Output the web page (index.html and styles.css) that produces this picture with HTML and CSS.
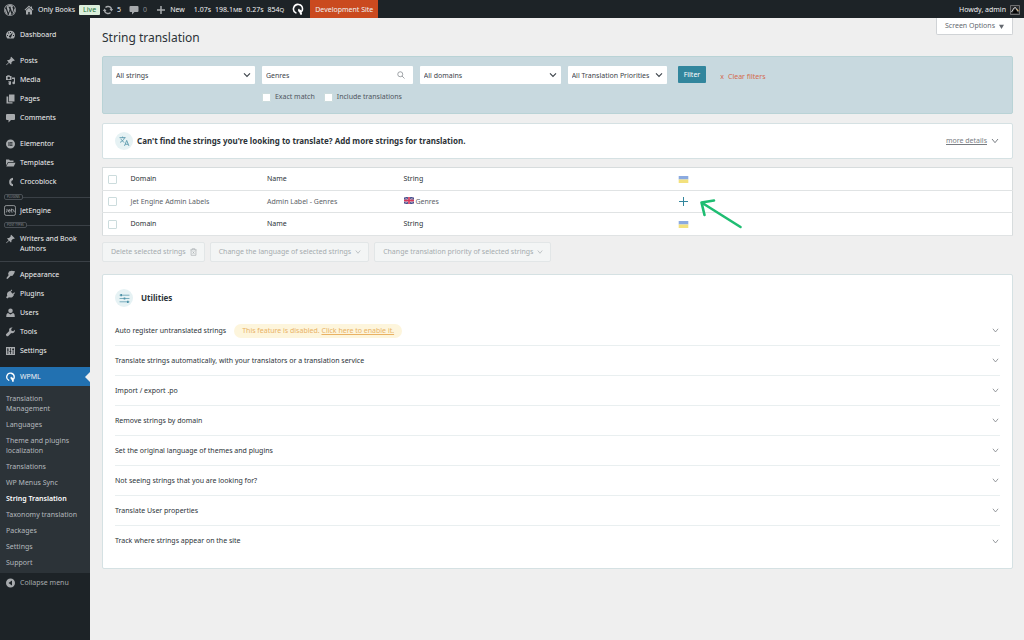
FILE: index.html
```html
<!DOCTYPE html>
<html lang="en">
<head>
<meta charset="utf-8">
<meta name="viewport" content="width=device-width, initial-scale=1">
<title>String translation</title>
<link rel="stylesheet" href="styles.css">
</head>
<body>
<svg class="defs" aria-hidden="true">
  <symbol id="wp" viewBox="0 0 20 20"><path fill-rule="evenodd" d="M20 10a10 10 0 1 1-20 0 10 10 0 0 1 20 0zM1.200 10a8.800 8.800 0 1 0 17.600 0 8.800 8.800 0 0 0-17.600 0z"/><path d="M2.600 6.900L6.500 17.800A8.200 8.200 0 0 1 2.600 6.900zM10.200 10.800l2.500 6.900a8 8 0 0 1-4.900.2zM17.200 6.200a8 8 0 0 1-3.100 10.900l2.400-7c.5-1.400.8-2.700.7-3.900zM3.300 5.300A8.200 8.200 0 0 1 15.600 4c-1.300 0-1.700 1.300-1.400 2.200.4 1.200 1.300 2 .9 3.900l-1.300 4.100-3-8.700 1-.1v-.8H7v.8l1 .1 1.300 3.600-1.900 5.400-3-9 1-.1v-.8z"/></symbol>
  <symbol id="home" viewBox="0 0 20 20"><path d="M10 1L1 9.500l1.500 1.500L10 4l7.500 7 1.500-1.500-3-2.800V3h-2.500v1.300zM10 5.500L4 11v8h4.500v-5h3v5H16v-8z"/></symbol>
  <symbol id="update" viewBox="0 0 20 20"><path d="M10 1.500a8.500 8.500 0 0 1 8.300 6.500H20.500L16.800 13 13 8h2.300A5.600 5.600 0 0 0 6 6L4 4a8.500 8.500 0 0 1 6-2.500zM3.200 7L7 12H4.700a5.600 5.600 0 0 0 9.300 2l2 2A8.500 8.500 0 0 1 1.700 12H-.5z"/></symbol>
  <symbol id="comment" viewBox="0 0 20 20"><path d="M3 2h14a2 2 0 0 1 2 2v8a2 2 0 0 1-2 2h-6l-5 5v-5H3a2 2 0 0 1-2-2V4a2 2 0 0 1 2-2z"/></symbol>
  <symbol id="plus" viewBox="0 0 20 20"><path d="M8.500 2h3v6.500H18v3h-6.500V18h-3v-6.500H2v-3h6.500z"/></symbol>
  <symbol id="wpml" viewBox="0 0 20 20"><path d="M6.500 16.500A7.500 7.500 0 1 1 17.500 10c0 3-1.500 4.500-3.500 4.500s-3-1.500-2.500-3.500" fill="none" stroke="currentColor" stroke-width="2.600" stroke-linecap="round"/><path d="M13.500 13l1.500 5" stroke="currentColor" stroke-width="3.500" stroke-linecap="round"/></symbol>
  <symbol id="dash" viewBox="0 0 20 20"><path fill-rule="evenodd" d="M3.800 17a9 9 0 1 1 12.400 0zM9 4h2v2H9zM4.800 6l1.400-1.400 1.400 1.400-1.400 1.400zM3 10h2v2H3zM15 10h2v2h-2zM14.800 4.500L8.500 11a2.200 2.200 0 1 0 3 2.600z"/></symbol>
  <symbol id="pin" viewBox="0 0 20 20"><path d="M11.500 1.500l7 7-1.500 1.400-1.800-.4-3.400 3.400c.5 1.800.1 3.200-.9 4.100L7.200 13.300 2 18.500l-.8-.8 5.200-5.200-3.500-3.600c1-1 2.400-1.400 4.200-.9l3.400-3.400-.4-1.700z"/></symbol>
  <symbol id="media" viewBox="0 0 20 20"><path fill-rule="evenodd" d="M1 2h2l1-1.500h4L9 2h3v8H1zm5.500 1.500a2.500 2.500 0 1 0 0 5 2.500 2.500 0 0 0 0-5zM13 5h6v11a2.700 2.700 0 1 1-2.200-2.700V8H13zM6 12h2.200v1.500L11 12v5.500a2.500 2.500 0 1 1-2-2.500H6z"/></symbol>
  <symbol id="pages" viewBox="0 0 20 20"><path d="M7 1h11v14H7zM2 5h3.500v11.500H14V19H2z"/></symbol>
  <symbol id="elementor" viewBox="0 0 20 20"><path fill-rule="evenodd" d="M10 1a9 9 0 1 1 0 18 9 9 0 0 1 0-18zM6 6v8h2V6zm3 0v1.700h5V6zm0 3.200v1.600h5V9.200zm0 3.100V14h5v-1.700z"/></symbol>
  <symbol id="folder" viewBox="0 0 20 20"><path d="M1 3h6l2 2h7v3H5l-4 7zM5.500 9.500H20L16.500 17H1.500z"/></symbol>
  <symbol id="croco" viewBox="0 0 20 20"><path d="M15 1.500v4.300a4.300 4.300 0 0 0 0 8.500v4.300A8.600 8.600 0 0 1 15 1.500z"/></symbol>
  <symbol id="jet" viewBox="0 0 22 20"><rect x="1" y="1" width="20" height="18" rx="3" fill="none" stroke="currentColor" stroke-width="1.500"/><path d="M3.500 13c1.500 0 2-1 2-2.500V7M8 10.500h3.500c0-3-3.500-3-3.500 0s2 3 3.500 2M13.500 6.500V12c0 1.200 1 1.500 2 1M13 8.500h3M17 8l2 5" fill="none" stroke="currentColor" stroke-width="1.600"/></symbol>
  <symbol id="brush" viewBox="0 0 20 20"><path d="M7 3l5-1.500 7 1-2 5-3.500 4.500-3-.5L4 18l-2.500-1.500L6.500 10 5 8z"/></symbol>
  <symbol id="plug" viewBox="0 0 20 20"><path d="M12 1l1.500 1.500-3 3 4 4 3-3L19 8l-3 3 1 1-3 4c-2 1.500-5 1.500-7 .5L3.500 19 1 16.500l2.500-3C2.500 11 3 8.500 4.500 6.500L8 4l1 1z"/></symbol>
  <symbol id="user" viewBox="0 0 20 20"><circle cx="10" cy="5.500" r="4.500"/><path d="M5 10l5 3 5-3c3 1 3.500 3 3.500 8h-17c0-5 .5-7 3.500-8z"/></symbol>
  <symbol id="wrench" viewBox="0 0 20 20"><path d="M18.500 5.500l-3 3-3.500-.8-.7-3.500 3-3C12 .5 9.500 1 8 3 7 4.500 7 6.500 7.500 8L1 14.500c-1 2 1.800 5 4 4L11.500 12c2 .7 4 .3 5.500-1 1.500-1.500 2.200-3.500 1.500-5.500z"/></symbol>
  <symbol id="sliders" viewBox="0 0 20 20"><path fill-rule="evenodd" d="M1 2h18v16H1zm3 2v3H3v2h1v7h1.500V9h1V7h-1V4zm5 0v6H8v2h1v4h1.500v-4h1v-2h-1V4zm5.500 0v2h-1v2h1v8H16V8h1V6h-1V4z"/></symbol>
  <symbol id="collapse" viewBox="0 0 20 20"><path fill-rule="evenodd" d="M10 1a9 9 0 1 1 0 18 9 9 0 0 1 0-18zm3 4l-7 5 7 5z"/></symbol>
  <symbol id="chev" viewBox="0 0 12 8"><path d="M1.500 1.500L6 6l4.500-4.500" fill="none" stroke="currentColor" stroke-width="1.700"/></symbol>
  <symbol id="thin" viewBox="0 0 12 8"><path d="M1.500 1L6 6.500 10.500 1" fill="none" stroke="currentColor" stroke-width="1.300"/></symbol>
  <symbol id="ua" viewBox="0 0 11 8"><path fill="#8baae0" d="M0 0h11v4H0z"/><path fill="#f3e17d" d="M0 4h11v4H0z"/></symbol>
</svg>

<header class="topbar">
  <a class="bar-item" href="#" aria-label="About WordPress"><svg class="i12"><use href="#wp"/></svg></a>
  <a class="bar-item site" href="#"><svg class="i10"><use href="#home"/></svg>Only Books <span class="live">Live</span></a>
  <a class="bar-item updates" href="#"><svg class="i10"><use href="#update"/></svg>5</a>
  <a class="bar-item dim" href="#"><svg class="i10"><use href="#comment"/></svg>0</a>
  <a class="bar-item new" href="#"><svg class="i10"><use href="#plus"/></svg>New</a>
  <a class="bar-item stats" href="#"><span>1.07s</span><span>198.1<small>MB</small></span><span>0.27s</span><span>854<small>Q</small></span></a>
  <a class="bar-item lang" href="#" aria-label="WPML"><svg class="i12"><use href="#wpml"/></svg></a>
  <a class="bar-item dev" href="#">Development Site</a>
  <a class="bar-item account" href="#">Howdy, admin
    <svg class="avatar" viewBox="0 0 20 20"><path fill="#292b2d" stroke="#888" stroke-width="1.500" d="M1 1h18v18H1z"/><path d="M3 14l5-8 3-1 5 8" fill="none" stroke="#d5d5d5" stroke-width="2"/><path d="M5 16l5-8 6 8z" fill="#050505"/><path d="M14 8l3 4" stroke="#c79a50" stroke-width="2"/></svg>
  </a>
</header>

<div class="shell">
  <nav class="sidebar">
    <a class="nav first" href="#"><svg><use href="#dash"/></svg>Dashboard</a>
    <div class="group posts">
      <a class="nav" href="#"><svg><use href="#pin"/></svg>Posts</a>
      <a class="nav" href="#"><svg><use href="#media"/></svg>Media</a>
      <a class="nav" href="#"><svg><use href="#pages"/></svg>Pages</a>
      <a class="nav" href="#"><svg><use href="#comment"/></svg>Comments</a>
    </div>
    <div class="group">
      <a class="nav" href="#"><svg><use href="#elementor"/></svg>Elementor</a>
      <a class="nav" href="#"><svg><use href="#folder"/></svg>Templates</a>
      <a class="nav" href="#"><svg><use href="#croco"/></svg>Crocoblock</a>
    </div>
    <div class="divider"><span>PLUGINS</span></div>
    <a class="nav jet" href="#"><svg><use href="#jet"/></svg>JetEngine</a>
    <div class="divider"><span>POST TYPES</span></div>
    <a class="nav two" href="#"><svg><use href="#pin"/></svg>Writers and Book Authors</a>
    <div class="divider plain"></div>
    <div class="admin">
      <a class="nav" href="#"><svg><use href="#brush"/></svg>Appearance</a>
      <a class="nav" href="#"><svg><use href="#plug"/></svg>Plugins</a>
      <a class="nav" href="#"><svg><use href="#user"/></svg>Users</a>
      <a class="nav" href="#"><svg><use href="#wrench"/></svg>Tools</a>
      <a class="nav" href="#"><svg><use href="#sliders"/></svg>Settings</a>
    </div>
    <a class="nav current" href="#"><svg><use href="#wpml"/></svg>WPML</a>
    <div class="submenu">
      <a href="#">Translation Management</a>
      <a href="#">Languages</a>
      <a href="#">Theme and plugins localization</a>
      <a href="#">Translations</a>
      <a href="#">WP Menus Sync</a>
      <a class="on" href="#">String Translation</a>
      <a href="#">Taxonomy translation</a>
      <a href="#">Packages</a>
      <a href="#">Settings</a>
      <a href="#">Support</a>
    </div>
    <button class="nav collapse" type="button"><svg><use href="#collapse"/></svg>Collapse menu</button>
  </nav>

  <main class="content">
    <div class="heading">
      <h1>String translation</h1>
      <button class="screen-options" type="button">Screen Options <svg viewBox="0 0 8 8"><path d="M0 1h8L4 8z"/></svg></button>
    </div>

    <form class="filters">
      <div class="field"><select aria-label="Strings"><option>All strings</option></select><svg><use href="#chev"/></svg></div>
      <div class="field"><input type="text" aria-label="Search" value="Genres"><svg class="search" viewBox="0 0 16 16"><circle cx="6.500" cy="6.500" r="5" fill="none" stroke="currentColor" stroke-width="1.400"/><path d="M10 10l5 5" stroke="currentColor" stroke-width="1.400"/></svg></div>
      <div class="field"><select aria-label="Domains"><option>All domains</option></select><svg><use href="#chev"/></svg></div>
      <div class="field priority"><select aria-label="Priorities"><option>All Translation Priorities</option></select><svg><use href="#chev"/></svg></div>
      <button class="apply" type="button">Filter</button>
      <a class="clear" href="#"><span>x</span>Clear filters</a>
      <div class="options">
        <label><input type="checkbox">Exact match</label>
        <label><input type="checkbox">Include translations</label>
      </div>
    </form>

    <section class="card notice">
      <span class="badge"><svg viewBox="0 0 20 20"><path d="M1 3h11M6.500 1v2M10 3c-1 4-4 7-8 8.500M3.500 5c1 3 3.500 5 6 6.500M10 18l4-10 4 10M11.500 15h5" fill="none" stroke="currentColor" stroke-width="1.500"/></svg></span>
      <h2>Can't find the strings you're looking to translate? Add more strings for translation.</h2>
      <a class="more" href="#">more details</a>
      <svg class="chev"><use href="#thin"/></svg>
    </section>

    <table class="strings">
      <colgroup><col class="c-check"><col class="c-text"><col class="c-text"><col class="c-string"><col></colgroup>
      <thead><tr><td><input type="checkbox" aria-label="Select all"></td><th>Domain</th><th>Name</th><th>String</th><th><svg class="flag" role="img" aria-label="Ukrainian"><use href="#ua"/></svg></th></tr></thead>
      <tbody><tr><td><input type="checkbox" aria-label="Select Genres"></td><td>Jet Engine Admin Labels</td><td>Admin Label - Genres</td>
        <td><svg class="uk" viewBox="0 0 20 14"><path fill="#41518f" d="M0 0h20v14H0z"/><path d="M0 0l20 14M20 0L0 14" stroke="#b9a5c4" stroke-width="2"/><path d="M10 0v14M0 7h20" stroke="#e0bccb" stroke-width="4.500"/><path d="M10 0v14M0 7h20" stroke="#d8385a" stroke-width="3"/></svg>Genres</td>
        <td><a class="add" href="#" aria-label="Add translation"><svg class="cross" viewBox="0 0 9 9"><path d="M4.500 0v9M0 4.500h9" stroke="#32869d" stroke-width="1"/></svg><svg class="pointer" viewBox="0 0 44 30"><path d="M41.500 28L2.500 3.500M15 1.500L2.500 3.500 5.500 16" fill="none" stroke="#1fbd72" stroke-width="2.600" stroke-linecap="round" stroke-linejoin="round"/></svg></a></td></tr></tbody>
      <tfoot><tr><td><input type="checkbox" aria-label="Select all"></td><th>Domain</th><th>Name</th><th>String</th><th><svg class="flag" role="img" aria-label="Ukrainian"><use href="#ua"/></svg></th></tr></tfoot>
    </table>

    <div class="bulk">
      <button type="button" disabled>Delete selected strings<svg class="trash" viewBox="0 0 16 18"><path d="M1 4h14M5 4V1.500h6V4M2.500 4v12.500h11V4M6 7.500l4 5.500M10 7.500L6 13" fill="none" stroke="currentColor" stroke-width="1.500"/></svg></button>
      <button type="button" disabled>Change the language of selected strings<svg><use href="#thin"/></svg></button>
      <button type="button" disabled>Change translation priority of selected strings<svg><use href="#thin"/></svg></button>
    </div>

    <section class="card utilities">
      <div class="util-head">
        <span class="badge"><svg viewBox="0 0 20 20"><path d="M1 4h18M1 10h18M1 16h18" stroke="currentColor" stroke-width="1.300"/><path d="M4 2v4M10 8v4M16 14v4" stroke="currentColor" stroke-width="3"/></svg></span>
        <h2>Utilities</h2>
      </div>
      <ul>
        <li>Auto register untranslated strings<span class="warn">This feature is disabled. <a href="#">Click here to enable it.</a></span><svg><use href="#thin"/></svg></li>
        <li>Translate strings automatically, with your translators or a translation service<svg><use href="#thin"/></svg></li>
        <li>Import / export .po<svg><use href="#thin"/></svg></li>
        <li>Remove strings by domain<svg><use href="#thin"/></svg></li>
        <li>Set the original language of themes and plugins<svg><use href="#thin"/></svg></li>
        <li>Not seeing strings that you are looking for?<svg><use href="#thin"/></svg></li>
        <li>Translate User properties<svg><use href="#thin"/></svg></li>
        <li>Track where strings appear on the site<svg><use href="#thin"/></svg></li>
      </ul>
    </section>
  </main>
</div>
</body>
</html>
```
FILE: styles.css
```css
* { box-sizing: border-box; }
body {
  margin: 0;
  min-height: 100vh;
  display: flex;
  flex-direction: column;
  background: #efefef;
  color: #3c434a;
  font: 7px/10px "Noto Sans", "Open Sans", sans-serif;
}
.defs { display: none; }
svg { fill: currentColor; flex: none; }
a { color: inherit; text-decoration: none; }
button, input, select { font: inherit; color: inherit; margin: 0; }
h1, h2 { margin: 0; }

/* Admin bar */
.topbar {
  height: 18px;
  display: flex;
  background: #1d2327;
  color: #f0f0f1;
}
.bar-item { display: flex; align-items: center; gap: 4px; padding-top: 1px; white-space: nowrap; }
.bar-item svg { color: #a7aaad; }
.i12 { width: 12px; height: 12px; }
.i10 { width: 10px; height: 10px; }
.topbar > :first-child { padding-left: 4px; }
.site { padding-left: 8px; }
.live {
  background: #dcefdc;
  color: #24733a;
  line-height: 10px;
  padding: 0 4px;
  border-radius: 1px;
}
.updates { padding-left: 3px; }
.dim { padding-left: 8px; color: #8c8f94; }
.new { padding-left: 9px; }
.stats { padding-left: 9px; gap: 4px; }
.stats small { font-size: 6px; }
.lang { padding: 0 6px 0 8px; }
.bar-item.lang svg { color: #fff; }
.dev { background: #ca4a1f; padding: 1px 5px 0; }
.account { margin-left: auto; padding-right: 4px; }
.avatar { width: 10px; height: 10px; }

/* Sidebar */
.shell { flex: 1; display: flex; align-items: stretch; }
.sidebar { width: 90px; flex: none; background: #1d2327; color: #f0f0f1; }
.nav {
  position: relative;
  display: flex;
  align-items: center;
  gap: 4px;
  width: 100%;
  padding: 4px 5px;
  line-height: 11px;
}
.nav svg { width: 11px; height: 10px; color: #a7aaad; }
.first { margin-top: 7px; }
.group { margin-top: 6px; padding-bottom: 1px; }
.posts { margin-top: 7px; }
.divider { position: relative; height: 10px; display: flex; align-items: center; }
.divider::after { content: ""; flex: 1; height: 1px; background: #3a4046; }
.divider span {
  margin-left: 4px;
  padding: 0 2px;
  border: 1px solid #4a5056;
  border-radius: 2px;
  color: #8c9095;
  font-size: 3px;
  line-height: 4px;
}
.jet { padding: 3px 4px 4px; }
.jet svg { width: 12px; height: 11px; }
.two { align-items: flex-start; line-height: 10px; }
.plain { height: 7px; }
.admin { padding-bottom: 7px; }
.current { background: #2271b1; }
.nav.current svg { color: #fff; }
.current::after {
  content: "";
  position: absolute;
  right: 0;
  top: 5px;
  border: 5px solid transparent;
  border-left: 0;
  border-right-color: #efefef;
}
.submenu { background: #2c3338; color: #b4b9be; padding: 5px 0 2px; }
.submenu a { display: block; padding: 3px 12px 3px 6px; }
.submenu .on { color: #fff; font-weight: 600; }
.collapse { border: 0; background: none; color: #a7aaad; }

/* Page */
.content { flex: 1; min-width: 0; padding: 0 11px 20px 12px; }
.heading { display: flex; justify-content: space-between; align-items: flex-start; height: 38px; }
h1 { font-size: 12px; line-height: 16px; font-weight: 400; color: #2c3338; padding-top: 12px; }
.screen-options {
  display: flex;
  align-items: center;
  gap: 4px;
  height: 17px;
  padding: 0 8px;
  border: 1px solid #d0d3d6;
  border-top: 0;
  border-radius: 0 0 2px 2px;
  background: #fff;
  color: #646970;
}
.screen-options svg { width: 5px; height: 5px; }

.filters {
  display: grid;
  grid-template-columns: 143fr 151fr 141fr auto auto 290fr;
  column-gap: 7px;
  row-gap: 8px;
  padding: 9px;
  height: 58px;
  align-content: start;
  background: #c8d9df;
  border: 1px solid #b9d3d6;
  border-radius: 2px;
}
.field { position: relative; height: 18px; }
.field select, .field input {
  display: block;
  width: 100%;
  height: 18px;
  padding: 1px 4px 0;
  border: 0;
  border-radius: 1px;
  background: #fff;
  color: #3c434a;
  appearance: none;
}
.field.priority select { padding-right: 17px; }
.field svg { position: absolute; right: 4px; top: 6px; width: 8px; height: 6px; pointer-events: none; }
.field .search { right: 8px; top: 5px; height: 8px; color: #7a8085; }
.apply { height: 17px; padding: 0 6px; margin-left: 4px; border: 0; border-radius: 1px; background: #32869d; color: #fff; }
.clear { display: flex; gap: 4px; color: #d4694e; padding: 6px 0 0 7px; }
.options { grid-column: 2 / -1; display: flex; gap: 9px; }
.options label { display: flex; align-items: center; gap: 4px; color: #50575e; }
input[type="checkbox"] {
  appearance: none;
  display: block;
  width: 9px;
  height: 9px;
  border: 1px solid #ccdcdd;
  border-radius: 1px;
  background: #fff;
}

.card { background: #fff; border: 1px solid #d5e1e3; border-radius: 2px; }
.notice { display: flex; align-items: center; height: 36px; margin: 9px 0 8px; padding: 0 13px 0 12px; }
.badge {
  display: grid;
  place-items: center;
  width: 18px;
  height: 18px;
  border-radius: 50%;
  background: #e6f2f4;
  color: #4f93a8;
}
.badge svg { width: 11px; height: 11px; }
h2 { font-size: 8px; line-height: 12px; font-weight: 700; color: #2c3338; }
.notice h2 { margin-left: 4px; }
.more { margin-left: auto; color: #787c82; text-decoration: underline; }
.chev { width: 8px; height: 6px; margin-left: 4px; color: #646970; }

.strings { width: 100%; table-layout: fixed; border-collapse: collapse; background: #fff; border: 1px solid #d7dcdd; }
.strings tr { height: 23px; border-bottom: 1px solid #e0e3e4; }
.strings tbody tr { height: 22px; }
.strings td, .strings th { padding: 0; text-align: left; font-weight: 400; color: #2c3338; }
.strings tbody td { color: #5c6268; }
.strings td:first-child { padding-left: 5px; }
.c-check { width: 28px; }
.c-text { width: 15%; }
.c-string { width: 30%; }
.flag { display: block; width: 11px; height: 7px; margin-left: 1px; }
.uk { width: 10px; height: 7px; margin-right: 2px; }
.add { position: relative; display: block; width: 11px; }
.cross { display: block; width: 9px; height: 9px; margin-left: 2px; }
.pointer { position: absolute; left: 22px; top: 2px; width: 44px; height: 30px; }

.bulk { display: flex; gap: 5px; margin: 6px 0 12px; }
.bulk button {
  display: flex;
  align-items: center;
  gap: 4px;
  height: 20px;
  padding: 0 7px 0 8px;
  border: 1px solid #e2e6e7;
  border-radius: 2px;
  background: #f3f5f5;
  color: #a5abae;
}
.bulk svg { width: 6px; height: 4px; }
.bulk .trash { width: 7px; height: 8px; }

.utilities { padding: 14px 12px 12px; }
.util-head { display: flex; align-items: center; gap: 8px; margin-bottom: 9px; }
.utilities ul { list-style: none; margin: 0; padding: 0; }
.utilities li { display: flex; align-items: center; height: 30px; border-bottom: 1px solid #e9eff0; color: #2c3338; }
.utilities li:last-child { border: 0; }
.utilities li svg { width: 7px; height: 5px; margin: 0 1px 0 auto; color: #787c82; }
.warn { margin-left: 8px; padding: 2px 8px; border-radius: 7px; background: #fdf5dc; color: #e9b264; }
.warn a { text-decoration: underline; }
```
